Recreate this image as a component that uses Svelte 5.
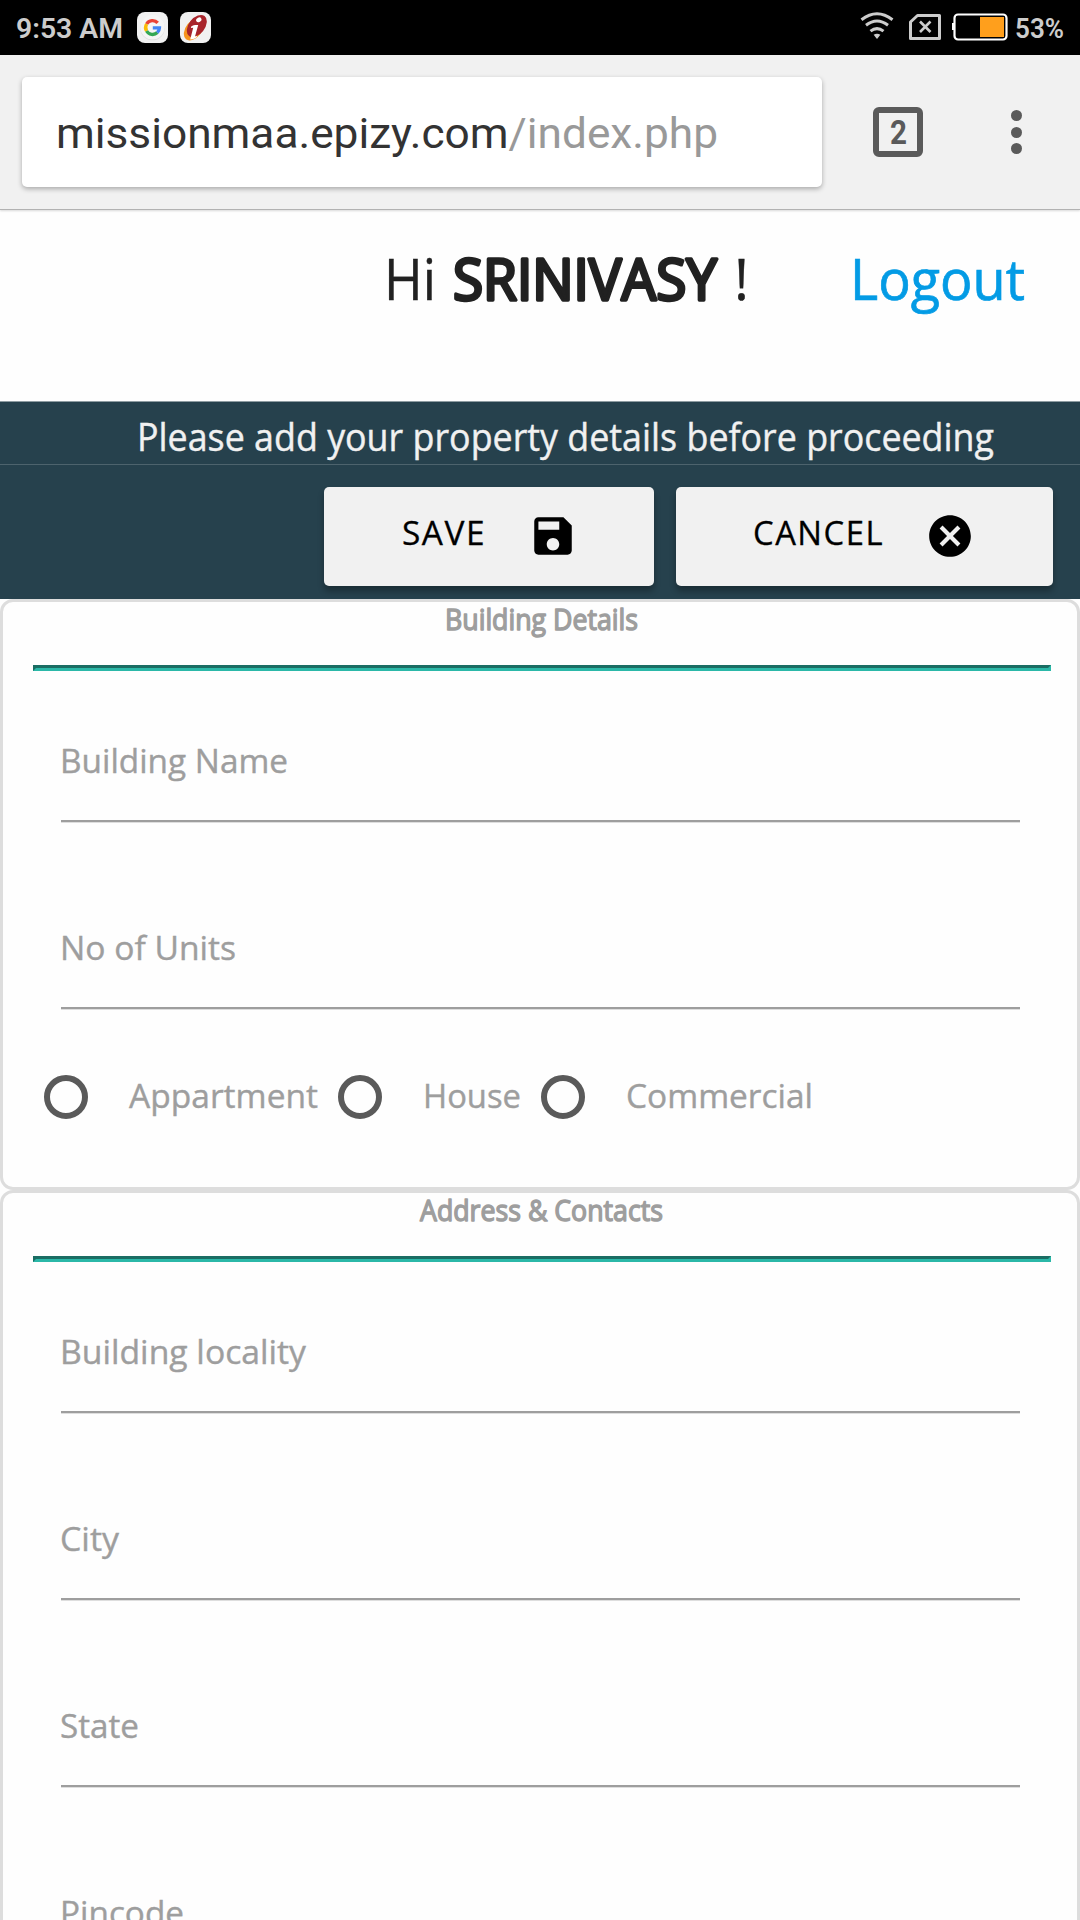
<script>
  const sections = [
    {
      title: 'Building Details',
      width: 193,
      fields: [
        { label: 'Building Name', width: 228 },
        { label: 'No of Units', width: 176 }
      ],
      options: [
        { label: 'Appartment', width: 189 },
        { label: 'House', width: 98 },
        { label: 'Commercial', width: 187 }
      ]
    },
    {
      title: 'Address & Contacts',
      width: 243,
      fields: [
        { label: 'Building locality', width: 246 },
        { label: 'City', width: 59 },
        { label: 'State', width: 79 },
        { label: 'Pincode', width: 124 }
      ],
      options: []
    }
  ];
</script>

<!-- Text fitted to a given width; the box is as tall as the capitals. -->
{#snippet fit(text, width, height, kind)}
  <svg class="fit {kind}" {width} {height}>
    <text x="0" y={height} textLength={width} lengthAdjust="spacingAndGlyphs">{text}</text>
  </svg>
{/snippet}

<div class="screen">
  <div class="status">
    <div class="left">
      {@render fit('9:53 AM', 107, 20, 'clock')}
      <svg class="badge" width="31" height="31" viewBox="0 0 31 31">
        <rect width="31" height="31" rx="8" fill="#f1f1f1" />
        <circle cx="15.5" cy="16" r="12.3" fill="#ddd" />
        <circle cx="15.5" cy="15.3" r="12.2" fill="#f5f5f5" />
        <g fill="none" stroke-width="3.4">
          <path d="M20.7 10.9A6.9 6.9 0 0 0 9.6 12" stroke="#ea4335" />
          <path d="M9.6 12A6.9 6.9 0 0 0 9.6 19" stroke="#fbbc05" />
          <path d="M9.6 19A6.9 6.9 0 0 0 20.3 20.6" stroke="#34a853" />
          <path d="M20.3 20.6A6.9 6.9 0 0 0 22.4 15.9H15.8" stroke="#4285f4" />
        </g>
      </svg>
      <svg class="badge" width="31" height="31" viewBox="0 0 31 31">
        <rect width="31" height="31" rx="8" fill="#f1f1f1" />
        <ellipse cx="14" cy="17" rx="8" ry="13" transform="rotate(38 14 17)" fill="#f7941d" />
        <ellipse cx="16.8" cy="14" rx="8" ry="12.6" transform="rotate(38 16.8 14)" fill="#a8242b" />
        <path d="M11.2 14.5c2-1.3 4-1.7 7-1.5L15 24.4l2-.6-.3 1.5c-1.5 1.3-3.5 2-6.5 2.2l3-11.7-2.3.3z" fill="#fff" />
        <ellipse cx="18.8" cy="7.8" rx="2.8" ry="2.2" transform="rotate(-30 18.8 7.8)" fill="#fff" />
      </svg>
    </div>
    <div class="right">
      <svg class="wifi" width="34" height="28" viewBox="0 0 34 28" fill="none" stroke="#ccc" stroke-width="3">
        <path d="M1.5 7.8Q17-4.2 32.5 7.8" />
        <path d="M6 13.3Q17 4.8 28 13.3" />
        <path d="M10.5 19.2Q17 14 23.5 19.2" />
        <path d="M13.6 22.8Q17 20.6 20.4 22.8L17 27z" fill="#ccc" stroke="none" />
      </svg>
      <svg class="sim" width="32" height="26" viewBox="0 0 32 26" fill="none" stroke="#ccc">
        <path d="M8.5 1.500H30.500V24.500H1.500V8z" stroke-width="3" stroke-linejoin="round" />
        <path d="M11 7.500l10.500 10.500M21.500 7.500L11 18" stroke-width="2.6" />
      </svg>
      <svg class="battery" width="56" height="28" viewBox="0 0 56 28">
        <rect x="0" y="10" width="3" height="7" fill="#fff" />
        <rect x="2.5" y="1.5" width="52" height="25" rx="3.5" fill="#000" stroke="#fff" stroke-width="2.2" />
        <rect x="28" y="4" width="24" height="20" fill="#ff9f1c" />
      </svg>
      {@render fit('53%', 49, 20, 'clock')}
    </div>
  </div>

  <div class="toolbar">
    <div class="address">
      <svg class="fit url" width="662" height="31">
        <text x="0" y="31" textLength="662" lengthAdjust="spacingAndGlyphs">missionmaa.epizy.com<tspan class="path">/index.php</tspan></text>
      </svg>
    </div>
    <div class="tabs">{@render fit('2', 17, 24, 'count')}</div>
    <div class="menu"><i></i><i></i><i></i></div>
  </div>

  <header>
    <div class="greeting">
      {@render fit('Hi', 52, 40, 'hello')}
      {@render fit('SRINIVASY', 264, 40, 'hello name')}
      {@render fit('!', 15, 40, 'hello')}
    </div>
    {@render fit('Logout', 175, 40, 'hello logout')}
  </header>

  <div class="notice">
    <div class="message">{@render fit('Please add your property details before proceeding', 857, 27, 'msg')}</div>
    <div class="actions">
      <button class="save">
        {@render fit('SAVE', 84, 24, 'action')}
        <svg width="50" height="50" viewBox="0 0 24 24"><path d="M17 3H5c-1.110 0-2 .9-2 2v14c0 1.100.89 2 2 2h14c1.100 0 2-.9 2-2V7l-4-4zm-5 16c-1.660 0-3-1.340-3-3s1.340-3 3-3 3 1.340 3 3-1.340 3-3 3zm3-10H5V5h10v4z" /></svg>
      </button>
      <button class="cancel">
        {@render fit('CANCEL', 131, 24, 'action')}
        <svg width="50" height="50" viewBox="0 0 24 24"><path d="M12 2C6.470 2 2 6.470 2 12s4.470 10 10 10 10-4.470 10-10S17.530 2 12 2zm5 13.590L15.590 17 12 13.410 8.410 17 7 15.590 10.590 12 7 8.410 8.410 7 12 10.590 15.590 7 17 8.410 13.410 12 17 15.590z" /></svg>
      </button>
    </div>
  </div>

  {#each sections as section}
    <section>
      <h2>{@render fit(section.title, section.width, 21, 'title')}</h2>
      <hr />
      <div class="fields">
        {#each section.fields as field}
          <div class="field">{@render fit(field.label, field.width, 24, 'label')}</div>
        {/each}
      </div>
      {#if section.options.length}
        <div class="options">
          {#each section.options as option}
            <div class="option">
              <span class="radio"></span>
              {@render fit(option.label, option.width, 24, 'label')}
            </div>
          {/each}
        </div>
      {/if}
    </section>
  {/each}
</div>

<style>
  :global(body) {
    margin: 0;
    background: #fff;
  }
  .screen {
    width: 1080px;
    height: 1920px;
    overflow: hidden;
    background: #fefefe;
    font-family: 'Open Sans', 'Noto Sans', sans-serif;
  }
  .screen * {
    box-sizing: border-box;
  }
  svg {
    display: block;
    flex: none;
  }
  .fit {
    overflow: visible;
  }

  .status {
    display: flex;
    justify-content: space-between;
    height: 55px;
    padding: 0 16px;
    background: #000;
  }
  .left,
  .right {
    display: flex;
    align-items: flex-start;
  }
  .clock {
    margin-top: 18px;
    font: 600 28px Roboto, sans-serif;
    fill: #ccc;
  }
  .badge {
    margin: 12px 0 0 12px;
  }
  .left .clock {
    margin-right: 2px;
  }
  .wifi {
    margin: 12px 15px 0 0;
  }
  .sim {
    margin: 14px 11px 0 0;
  }
  .battery {
    margin: 13px 7px 0 0;
  }

  .toolbar {
    display: flex;
    align-items: flex-start;
    height: 155px;
    padding: 22px 0 0 22px;
    background: #f1f1f1;
    border-bottom: 1px solid #b2b2b2;
    box-shadow: 0 1px 2px rgba(0, 0, 0, 0.15);
  }
  .address {
    width: 800px;
    height: 110px;
    padding: 40px 0 0 34px;
    border-radius: 5px;
    background: #fff;
    box-shadow: 0 2px 5px rgba(0, 0, 0, 0.3);
  }
  .url {
    font: 400 43px Roboto, sans-serif;
    fill: #333;
  }
  .path {
    fill: #999;
  }
  .tabs {
    display: flex;
    justify-content: center;
    width: 50px;
    height: 50px;
    margin: 30px 0 0 51px;
    padding-top: 7px;
    border: 6px solid #5a5a5a;
    border-radius: 6px;
  }
  .count {
    font: 700 33px Roboto, sans-serif;
    fill: #5a5a5a;
  }
  .menu {
    display: grid;
    gap: 5.5px;
    margin: 33px 0 0 88px;
  }
  .menu i {
    width: 11px;
    height: 11px;
    border-radius: 50%;
    background: #5a5a5a;
  }

  header {
    display: flex;
    justify-content: space-between;
    height: 191px;
    padding: 50px 55px 0 384px;
  }
  .greeting {
    display: flex;
    align-items: flex-end;
    gap: 17px;
    height: 40px;
  }
  .hello {
    font-size: 56px;
    fill: #212121;
    stroke: #212121;
    stroke-width: 0.4px;
  }
  /* Emboldened by outlining the regular weight. */
  .name {
    stroke-width: 3.4px;
    stroke-linejoin: round;
  }
  .logout {
    fill: #039be5;
    stroke: #039be5;
    stroke-width: 0.7px;
  }

  .notice {
    height: 198px;
    border-top: 1px solid #8e9ca2;
    background: #26414d;
  }
  .message {
    display: flex;
    height: 63px;
    padding: 22px 0 0 137px;
    border-bottom: 1px solid #4d636d;
  }
  .msg {
    font-size: 38px;
    fill: #f1f1f1;
    stroke: #f1f1f1;
    stroke-width: 0.4px;
  }
  .actions {
    display: flex;
    justify-content: flex-end;
    gap: 22px;
    padding: 22px 27px 0 0;
  }
  button {
    display: flex;
    height: 99px;
    padding: 34px 0 0;
    border: 0;
    border-radius: 5px;
    background: #f1f1f1;
    box-shadow: 0 5px 6px rgba(0, 0, 0, 0.3);
    font: inherit;
  }
  button svg:last-child {
    margin-top: -10px;
  }
  .save {
    width: 330px;
    padding-left: 78px;
    gap: 42px;
  }
  .cancel {
    width: 377px;
    padding-left: 77px;
    gap: 41px;
  }
  .action {
    font-size: 33px;
    letter-spacing: 1.5px;
    fill: #000;
    stroke: #000;
    stroke-width: 0.3px;
  }

  section {
    height: 591px;
    border: 3px solid #ddd;
    border-radius: 13px;
  }
  section:last-child {
    height: 800px;
  }
  h2 {
    display: flex;
    justify-content: center;
    height: 63px;
    margin: 0;
    padding: 7px 0 0 2px;
  }
  .title {
    font-size: 28.5px;
    font-weight: 400;
    fill: #9e9e9e;
    stroke: #9e9e9e;
    stroke-width: 1.4px;
    stroke-linejoin: round;
  }
  hr {
    height: 6px;
    margin: 0 26px 0 30px;
    border: 3px solid #2bb8a8;
    border-top-color: #1a6d63;
    border-left-color: #1a6d63;
  }
  .fields {
    display: grid;
    gap: 114px;
    padding: 78px 57px 0 58px;
  }
  .field {
    height: 73px;
    border-bottom: 2px solid #9e9e9e;
    box-shadow: 0 1px 0 #dedede;
  }
  .field .label {
    margin-left: -1px;
  }
  .label {
    font-size: 33.5px;
    fill: #9e9e9e;
    stroke: #9e9e9e;
    stroke-width: 0.4px;
  }
  .options {
    display: flex;
    gap: 20px;
    padding: 66px 0 0 41px;
  }
  .option {
    display: flex;
    align-items: center;
    gap: 41px;
    height: 44px;
  }
  .option .label {
    margin-bottom: 2px;
  }
  .radio {
    width: 44px;
    height: 44px;
    border: 6px solid #5a5a5a;
    border-radius: 50%;
  }
</style>
